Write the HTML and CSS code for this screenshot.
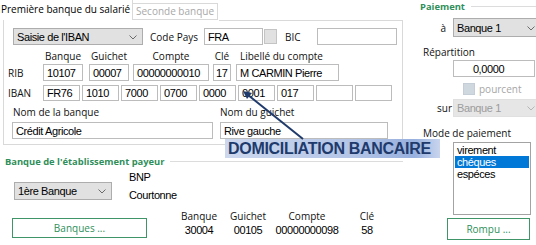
FILE: index.html
```html
<!DOCTYPE html>
<html lang="fr">
<head>
<meta charset="utf-8">
<title>Banque</title>
<link rel="stylesheet" href="styles.css">
</head>
<body>
<div class="screen">
  <div class="left">
    <div class="tabs">
      <div class="tab tab-active">Première banque du salarié</div>
      <div class="tab tab-off">Seconde banque</div>
    </div>
    <div class="panel">
      <div class="row r1">
        <div class="select sel-iban"><span class="val">Saisie de l'IBAN</span><svg class="chev" viewBox="0 0 8 5"><path d="M0.5 0.5 L4 4 L7.5 0.5"/></svg></div>
        <span class="lbl lbl-pays">Code Pays</span>
        <div class="inp inp-fra"><span class="val">FRA</span></div>
        <div class="sqbtn"></div>
        <span class="lbl lbl-bic">BIC</span>
        <div class="inp inp-bic"></div>
      </div>
      <div class="row heads">
        <span class="rowlbl"></span>
        <span class="lbl c-b center">Banque</span>
        <span class="lbl c-g center">Guichet</span>
        <span class="lbl c-c center">Compte</span>
        <span class="lbl c-k center">Clé</span>
        <span class="lbl c-l lib">Libellé du compte</span>
      </div>
      <div class="row rib">
        <span class="lbl rowlbl">RIB</span>
        <div class="inp c-b"><span class="val">10107</span></div>
        <div class="inp c-g"><span class="val">00007</span></div>
        <div class="inp c-c"><span class="val">00000000010</span></div>
        <div class="inp c-k"><span class="val">17</span></div>
        <div class="inp c-l"><span class="val">M CARMIN Pierre</span></div>
      </div>
      <div class="row iban">
        <span class="lbl rowlbl">IBAN</span>
        <div class="inp ib"><span class="val">FR76</span></div>
        <div class="inp ib"><span class="val">1010</span></div>
        <div class="inp ib"><span class="val">7000</span></div>
        <div class="inp ib"><span class="val">0700</span></div>
        <div class="inp ib"><span class="val">0000</span></div>
        <div class="inp ib"><span class="val">0001</span></div>
        <div class="inp ib"><span class="val">017</span></div>
        <div class="inp ib"></div>
        <div class="inp ib"></div>
      </div>
      <div class="row names-l">
        <span class="lbl nl-bank">Nom de la banque</span>
        <span class="lbl">Nom du guichet</span>
      </div>
      <div class="row names-i">
        <div class="inp ni-bank"><span class="val">Crédit Agricole</span></div>
        <div class="inp ni-gui"><span class="val">Rive gauche</span></div>
      </div>
    </div>
    <div class="section sec-payeur"><span class="sec-title">Banque de l'établissement payeur</span><span class="sec-line"></span></div>
    <div class="payeur">
      <div class="select sel-1ere"><span class="val">1ère Banque</span><svg class="chev" viewBox="0 0 8 5"><path d="M0.5 0.5 L4 4 L7.5 0.5"/></svg></div>
      <div class="bnp">
        <div class="val">BNP</div>
        <div class="val">Courtonne</div>
      </div>
    </div>
    <div class="bottom">
      <div class="btn btn-banques">Banques ...</div>
      <div class="nums">
        <span class="lbl">Banque</span>
        <span class="lbl">Guichet</span>
        <span class="lbl">Compte</span>
        <span class="lbl">Clé</span>
        <span class="val">30004</span>
        <span class="val">00105</span>
        <span class="val">00000000098</span>
        <span class="val">58</span>
      </div>
    </div>
  </div>

  <div class="right">
    <div class="section sec-pai"><span class="sec-title">Paiement</span><span class="sec-line"></span></div>
    <div class="rrow r-a">
      <span class="lbl rlbl">à</span>
      <div class="select sel-banque"><span class="val">Banque 1</span><svg class="chev" viewBox="0 0 8 5"><path d="M0.5 0.5 L4 4 L7.5 0.5"/></svg></div>
    </div>
    <div class="lbl rhead rep">Répartition</div>
    <div class="inp inp-rep"><span class="val">0,0000</span></div>
    <div class="rrow r-pct">
      <span class="chk"></span>
      <span class="lbl dis">pourcent</span>
    </div>
    <div class="rrow r-sur">
      <span class="lbl rlbl">sur</span>
      <div class="select sel-dis"><span class="val">Banque 1</span><svg class="chev" viewBox="0 0 8 5"><path d="M0.5 0.5 L4 4 L7.5 0.5"/></svg></div>
    </div>
    <div class="lbl rhead mode">Mode de paiement</div>
    <div class="listbox">
      <div class="item">virement</div>
      <div class="item item-sel">chéques</div>
      <div class="item">espéces</div>
    </div>
    <div class="btn btn-rompu">Rompu ...</div>
  </div>

  <div class="callout">DOMICILIATION BANCAIRE</div>
  <svg class="arrow" viewBox="0 0 536 245" width="536" height="245">
    <line x1="303" y1="139" x2="248" y2="95" />
    <polygon points="243,91 252,93 247,99" />
  </svg>
</div>
</body>
</html>
```

FILE: styles.css
```css
* { box-sizing: border-box; }
html, body { margin: 0; padding: 0; background: #ffffff; }
.screen {
  position: relative;
  width: 536px;
  height: 245px;
  overflow: hidden;
  display: flex;
  background: #ffffff;
  color: #111111;
}
.lbl {
  font-family: "Open Sans", "Noto Sans", sans-serif;
  font-size: 10px;
  color: #111111;
  white-space: nowrap;
}
.val {
  font-family: "Liberation Sans", Arial, sans-serif;
  font-size: 11px;
  letter-spacing: -0.4px;
  color: #000000;
  white-space: nowrap;
}
.center { text-align: center; }

/* Left column */
.left { width: 410px; flex: none; }
.tabs { display: flex; height: 20px; align-items: flex-end; }
.tab {
  font-family: "Open Sans", "Noto Sans", sans-serif;
  font-size: 10px;
  white-space: nowrap;
}
.tab-active {
  width: 133px;
  height: 20px;
  line-height: 19px;
  padding-left: 1px;
  color: #000;
  border-right: 1px solid #d9d9d9;
}
.tab-off {
  width: 85px;
  height: 17px;
  line-height: 15px;
  padding-left: 3px;
  color: #a8a8a8;
  border-top: 1px solid #d9d9d9;
  border-right: 1px solid #d9d9d9;
  border-bottom: 1px solid #d9d9d9;
}
.panel {
  margin-left: 3px;
  width: 400px;
  border: 1px solid #d9d9d9;
  border-top: none;
  position: relative;
  padding: 8px 0 5px 4px;
}
.panel::before {
  content: "";
  position: absolute;
  top: 0;
  left: 215px;
  right: -1px;
  border-top: 1px solid #d9d9d9;
}
.row { display: flex; align-items: center; }
.r1 { height: 17px; }
.select {
  position: relative;
  background: #e1e1e1;
  border: 1px solid #adadad;
  display: flex;
  align-items: center;
  padding-left: 3px;
}
.chev {
  position: absolute;
  right: 5px;
  top: 50%;
  width: 8px;
  height: 5px;
  margin-top: -2px;
  fill: none;
  stroke: #6b6b6b;
  stroke-width: 1;
}
.sel-iban { margin-left: 5px; width: 130px; height: 17px; }
.lbl-pays { margin-left: 7px; width: 54px; }
.inp {
  background: #ffffff;
  border: 1px solid #bcbcbc;
  display: flex;
  align-items: center;
  padding-left: 3px;
  overflow: hidden;
}
.inp-fra { width: 59px; height: 17px; }
.sqbtn {
  width: 13px;
  height: 15px;
  margin-left: 1px;
  background: #e1e1e1;
  border: 1px solid #c4c4c4;
}
.lbl-bic { margin-left: 8px; width: 32px; }
.inp-bic { width: 80px; height: 17px; }

.heads { margin-top: 5px; height: 13px; line-height: 13px; }
.rowlbl { width: 35px; flex: none; }
.c-b { width: 40px; flex: none; }
.c-g { width: 40px; margin-left: 6px; flex: none; }
.c-c { width: 76px; margin-left: 4px; flex: none; }
.c-k { width: 18px; margin-left: 4px; flex: none; }
.c-l { width: 103px; margin-left: 5px; flex: none; }
.lib { padding-left: 4px; }
.rib { margin-top: 1px; height: 17px; }
.rib .inp { height: 17px; }
.rib .c-k { padding-left: 2px; }
.iban { margin-top: 4px; height: 16px; }
.ib { width: 37px; height: 16px; margin-right: 2px; flex: none; }
.names-l { margin-top: 3px; height: 15px; }
.nl-bank { margin-left: 5px; width: 207px; }
.names-i { margin-top: 3px; height: 17px; }
.ni-bank { margin-left: 4px; width: 201px; height: 17px; }
.ni-gui { margin-left: 7px; width: 168px; height: 17px; }

.section { display: flex; align-items: center; }
.sec-title {
  font-family: "Open Sans", "Noto Sans", sans-serif;
  font-size: 9.4px;
  font-weight: 700;
  color: #2f8f5b;
  white-space: nowrap;
}
.sec-line { flex: 1; height: 0; border-top: 1px solid #dcdcdc; margin-left: 5px; }
.sec-payeur { margin-top: 9px; height: 14px; padding-left: 5px; width: 403px; }

.payeur { display: flex; height: 36px; }
.sel-1ere { margin-left: 14px; margin-top: 14px; width: 98px; height: 18px; }
.bnp { margin-left: 17px; }
.bnp .val { height: 18px; line-height: 18px; }

.bottom { display: flex; }
.btn {
  border: 1px solid #3f9468;
  background: #ffffff;
  color: #2f8f5b;
  font-family: "Open Sans", "Noto Sans", sans-serif;
  font-size: 10px;
  display: flex;
  align-items: center;
  justify-content: center;
}
.btn-banques { margin-left: 12px; margin-top: 14px; width: 135px; height: 20px; }
.nums {
  margin-left: 28px;
  margin-top: 5px;
  display: grid;
  grid-template-columns: 48px 50px 68px 52px;
  grid-auto-rows: 14px;
  align-items: center;
  justify-items: center;
}

/* Right column */
.right { width: 126px; flex: none; }
.sec-pai { height: 12px; padding-left: 10px; }
.sec-pai .sec-line { margin-left: 6px; }
.rrow { display: flex; align-items: center; }
.rlbl { width: 43px; text-align: right; padding-right: 7px; flex: none; }
.r-a { margin-top: 6px; height: 19px; }
.sel-banque { width: 90px; height: 19px; flex: none; }
.sel-banque .chev { right: 7px; }
.rhead { height: 14px; line-height: 14px; padding-left: 13px; }
.rep { margin-top: 8px; }
.inp-rep {
  margin-top: 1px;
  margin-left: 43px;
  width: 82px;
  height: 17px;
  justify-content: center;
  padding-left: 0;
  padding-right: 11px;
}
.r-pct { margin-top: 4px; height: 16px; }
.chk {
  margin-left: 53px;
  width: 12px;
  height: 12px;
  background: #cfd8df;
  border: 1px solid #c5ced6;
}
.dis { color: #a6a6a6; margin-left: 4px; }
.r-sur { margin-top: 2px; height: 18px; }
.r-sur .rlbl { padding-right: 1px; }
.sel-dis { width: 90px; height: 18px; background: #e6e6e6; border-color: #e0e0e0; flex: none; }
.sel-dis .val { color: #9c9c9c; }
.sel-dis .chev { right: 7px; stroke: #b5b5b5; }
.mode { margin-top: 9px; }
.listbox {
  margin-top: 2px;
  margin-left: 43px;
  width: 78px;
  height: 73px;
  border: 1px solid #a3a3a3;
  padding: 1px 1px;
}
.item {
  font-family: "Liberation Sans", Arial, sans-serif;
  font-size: 11px;
  letter-spacing: -0.4px;
  height: 12px;
  line-height: 12px;
  padding-left: 2px;
  color: #000;
}
.item-sel { background: #0078d7; color: #ffffff; }
.btn-rompu { margin-top: 3px; margin-left: 37px; width: 83px; height: 22px; }

/* Overlays */
.callout {
  position: absolute;
  left: 225px;
  top: 139px;
  width: 215px;
  height: 19px;
  padding-left: 3px;
  background: linear-gradient(to right, #cdd8ee 0%, #b3c4e6 60%, #97b0de 88%, #c9d5ee 100%);
  font-family: "Liberation Sans", Arial, sans-serif;
  font-weight: 700;
  font-size: 16px;
  letter-spacing: -0.3px;
  line-height: 19px;
  color: #203a6c;
  white-space: nowrap;
}
.arrow {
  position: absolute;
  left: 0;
  top: 0;
  pointer-events: none;
}
.arrow line { stroke: #203a6c; stroke-width: 2; }
.arrow polygon { fill: #203a6c; }
```
